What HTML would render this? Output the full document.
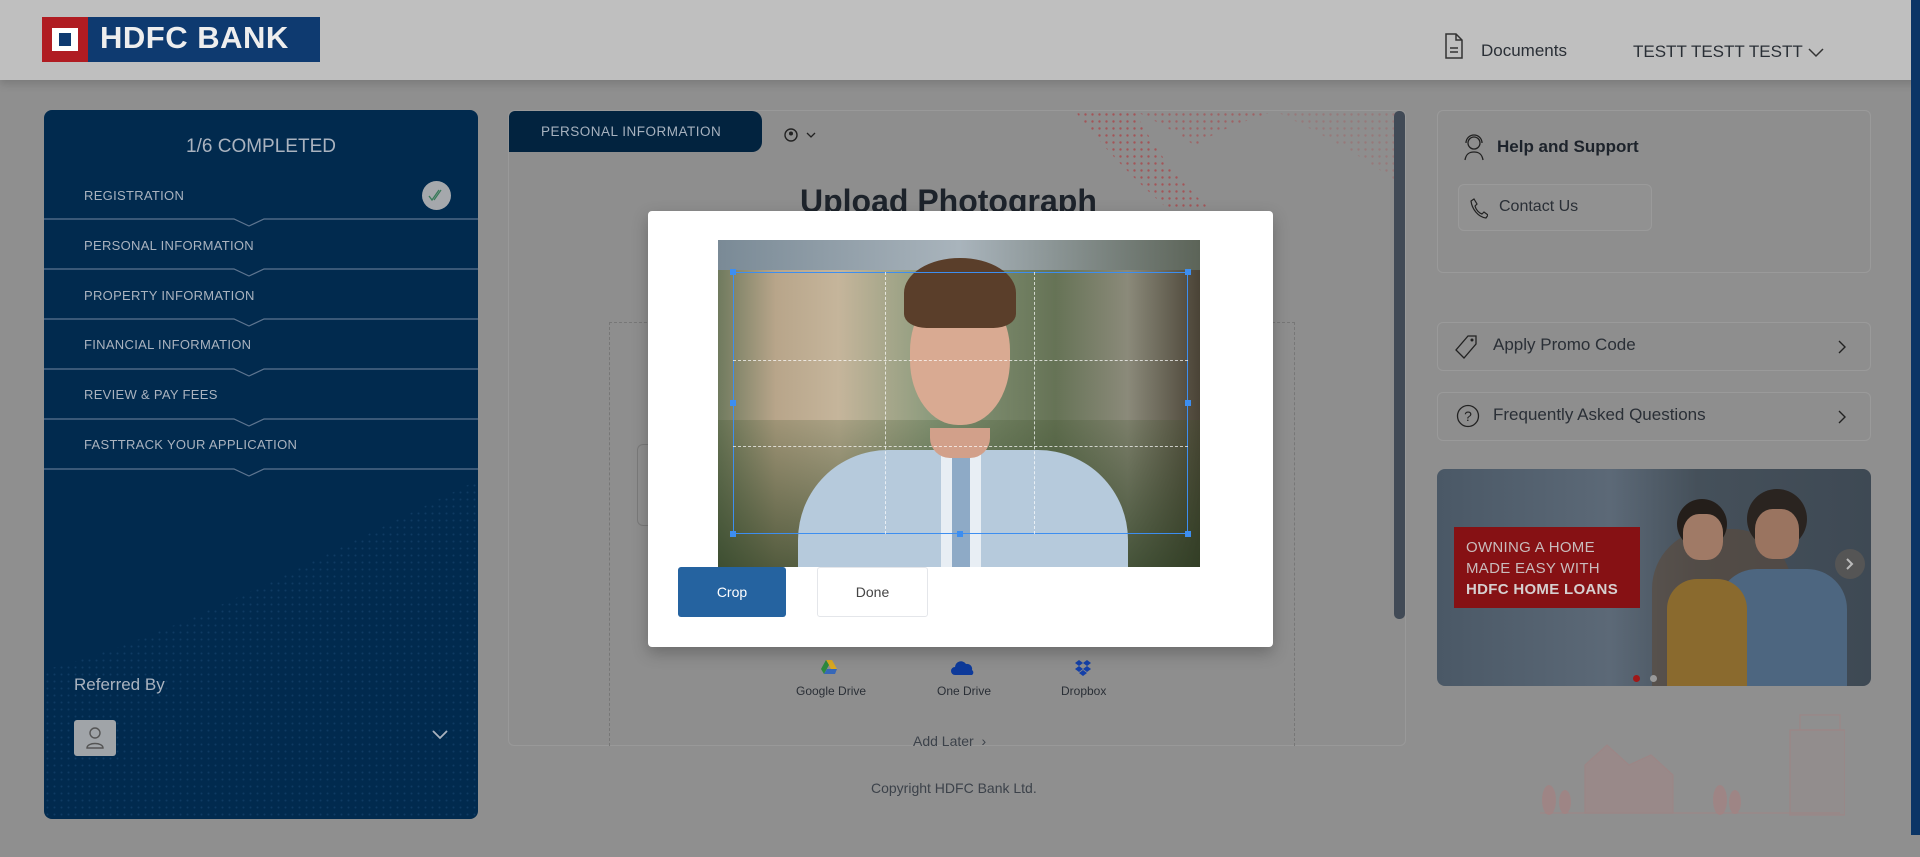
<!DOCTYPE html>
<html><head><meta charset="utf-8"><style>
*{box-sizing:border-box;margin:0;padding:0}
body{width:1920px;height:857px;overflow:hidden;background:#8f8f8f;font-family:"Liberation Sans",sans-serif;position:relative}
.abs{position:absolute}
.hdr{left:0;top:0;width:1920px;height:80px;background:#bfbfbf;box-shadow:0 4px 8px rgba(0,0,0,.15)}
.side{left:44px;top:110px;width:434px;height:709px;background:#012a4e;border-radius:8px;overflow:hidden}
.side .t{position:absolute;top:134px;left:0;width:100%;text-align:center;color:#aab3bf;font-size:19px}
.item{position:absolute;left:40px;color:#aab3bf;font-size:13px;letter-spacing:.3px}
.card{border:1px solid #999;border-radius:6px}
.txt{color:#2a2f36}
</style></head><body>
<div class="abs hdr"></div>
<!-- logo -->
<div class="abs" style="left:42px;top:17px;width:278px;height:45px;background:#0e3a70"></div>
<div class="abs" style="left:42px;top:17px;width:46px;height:45px;background:#b01c22"></div>
<div class="abs" style="left:52px;top:28px;width:26px;height:23px;background:#fff"></div>
<div class="abs" style="left:59px;top:33px;width:12px;height:13px;background:#0e3a70"></div>
<div class="abs" style="left:100px;top:20px;color:#eee;font-weight:bold;font-size:31px;letter-spacing:.5px">HDFC BANK</div>
<!-- header right -->
<svg class="abs" style="left:1444px;top:32px" width="20" height="28" viewBox="0 0 20 28"><path d="M2 2h10l6 6v18H2z M12 2v6h6 M6 16h8 M6 20h8" fill="none" stroke="#333" stroke-width="1.5"/></svg>
<div class="abs txt" style="left:1481px;top:41px;font-size:17px">Documents</div>
<div class="abs txt" style="left:1633px;top:42px;font-size:17px">TESTT TESTT TESTT</div>
<svg class="abs" style="left:1808px;top:48px" width="16" height="10"><path d="M1 1l7 7 7-7" fill="none" stroke="#333" stroke-width="1.5"/></svg>
<div class="abs" style="left:1911px;top:0;width:9px;height:835px;background:#0b3566"></div>
<!-- sidebar -->
<div class="abs side">
<svg class="abs" style="left:0;top:330px" width="434" height="380"><defs><pattern id="d" width="7" height="7" patternUnits="userSpaceOnUse"><circle cx="3.5" cy="3.5" r="1" fill="#2a5a8a"/></pattern></defs><path d="M0 230 C120 200 250 130 434 40 V380 H0z" fill="url(#d)" opacity=".35"/></svg>
<div class="t" style="top:26px">1/6 COMPLETED</div>
<div class="item" style="top:78px">REGISTRATION</div>
<div class="abs" style="left:378px;top:71px;width:29px;height:29px;border-radius:50%;background:#a5a8ac"></div>
<svg class="abs" style="left:384px;top:78px" width="18" height="14"><path d="M1 8l3 4 7-10 M6 12l7-10" fill="none" stroke="#3a7a5a" stroke-width="1.3"/></svg>
<div class="item" style="top:128px">PERSONAL INFORMATION</div>
<div class="item" style="top:178px">PROPERTY INFORMATION</div>
<div class="item" style="top:227px">FINANCIAL INFORMATION</div>
<div class="item" style="top:277px">REVIEW &amp; PAY FEES</div>
<div class="item" style="top:327px">FASTTRACK YOUR APPLICATION</div>
<svg class="abs" style="left:0;top:108px" width="434" height="270"><g fill="none" stroke="#5e7590" stroke-width="1.2">
<path d="M0 1H190l15 7 15-7H434"/><path d="M0 51H190l15 7 15-7H434"/><path d="M0 101H190l15 7 15-7H434"/><path d="M0 151H190l15 7 15-7H434"/><path d="M0 201H190l15 7 15-7H434"/><path d="M0 251H190l15 7 15-7H434"/></g></svg>
<div class="abs" style="left:30px;top:565px;color:#aab3bf;font-size:17px">Referred By</div>
<div class="abs" style="left:30px;top:610px;width:42px;height:36px;background:#a0a4a8;border-radius:3px"></div>
<svg class="abs" style="left:41px;top:616px" width="20" height="24"><circle cx="10" cy="7" r="5" fill="none" stroke="#555" stroke-width="1.4"/><path d="M2 22c0-6 16-6 16 0z" fill="none" stroke="#555" stroke-width="1.4"/></svg>
<svg class="abs" style="left:388px;top:620px" width="16" height="10"><path d="M1 1l7 7 7-7" fill="none" stroke="#aab3bf" stroke-width="1.8"/></svg>
</div>
<!-- main card -->
<div class="abs card" style="left:508px;top:110px;width:898px;height:636px;background:#8e8e8e"></div>
<svg class="abs" style="left:1075px;top:111px" width="320" height="120"><defs><pattern id="r" width="7" height="7" patternUnits="userSpaceOnUse"><circle cx="3.5" cy="3.5" r="1.2" fill="#a8474a"/></pattern></defs><path d="M0 0H60C80 40 110 80 150 110 L120 120 C80 90 30 40 0 0z" fill="url(#r)" opacity=".8"/><path d="M60 0H200C170 10 140 20 120 35 100 20 80 10 60 0z" fill="url(#r)" opacity=".6"/><path d="M200 0H320V70C280 40 240 20 200 0z" fill="url(#r)" opacity=".3"/></svg>
<div class="abs" style="left:509px;top:111px;width:253px;height:41px;background:#02233f;border-radius:6px 10px 10px 0"></div>
<div class="abs" style="left:541px;top:124px;color:#a7b2bf;font-size:13.5px;letter-spacing:.5px">PERSONAL INFORMATION</div>
<svg class="abs" style="left:784px;top:127px" width="40" height="16"><circle cx="7" cy="8" r="6" fill="none" stroke="#222" stroke-width="1.4"/><circle cx="7" cy="6.5" r="2" fill="#222"/><path d="M23 6l4 4 4-4" fill="none" stroke="#222" stroke-width="1.3"/></svg>
<div class="abs" style="left:800px;top:183px;font-size:32px;font-weight:bold;color:#1d232b">Upload Photograph</div>
<div class="abs" style="left:609px;top:322px;width:686px;height:424px;border:1px dashed #777;border-bottom:none"></div>
<div class="abs" style="left:637px;top:444px;width:30px;height:82px;border:1px solid #7a7a7a;border-right:none;border-radius:6px 0 0 6px"></div>
<div class="abs" style="left:1394px;top:111px;width:11px;height:508px;background:#414a56;border-radius:5px"></div>
<!-- cloud options -->
<svg class="abs" style="left:821px;top:659px" width="16" height="16"><path d="M5 1h6l5 9h-6z" fill="#d9a820"/><path d="M5 1L0 10l3 5 5-9z" fill="#2d8a3e"/><path d="M3 15h11l2-5H6z" fill="#3667b8"/></svg>
<div class="abs txt" style="left:796px;top:684px;font-size:12px">Google Drive</div>
<svg class="abs" style="left:951px;top:660px" width="24" height="16"><path d="M4 15a4 4 0 010-8 6 6 0 0111-3 5 5 0 016 6 3 3 0 010 5z" fill="#0e3a9a"/></svg>
<div class="abs txt" style="left:937px;top:684px;font-size:12px">One Drive</div>
<svg class="abs" style="left:1074px;top:659px" width="18" height="18"><path d="M5 1l4 3-4 3-4-3zM13 1l4 3-4 3-4-3zM5 7l4 3-4 3-4-3zM13 7l4 3-4 3-4-3zM9 11l4 3-4 3-4-3z" fill="#1440a8"/></svg>
<div class="abs txt" style="left:1061px;top:684px;font-size:12px">Dropbox</div>
<div class="abs" style="left:913px;top:733px;font-size:14px;color:#3c424a">Add Later &nbsp;›</div>
<div class="abs" style="left:871px;top:780px;font-size:14px;color:#3c424a">Copyright HDFC Bank Ltd.</div>
<!-- right panel -->
<div class="abs card" style="left:1437px;top:110px;width:434px;height:163px;background:#8e8e8e;border-color:#9a9a9a"></div>
<svg class="abs" style="left:1462px;top:133px" width="24" height="28"><circle cx="12" cy="10" r="6" fill="none" stroke="#222" stroke-width="1.3"/><path d="M4 10a8 8 0 0116 0M3 27c1-6 4-8 9-8s8 2 9 8" fill="none" stroke="#222" stroke-width="1.3"/></svg>
<div class="abs" style="left:1497px;top:137px;font-size:17px;font-weight:bold;color:#1d232b">Help and Support</div>
<div class="abs card" style="left:1458px;top:184px;width:194px;height:47px;background:#919191;border-color:#9a9a9a"></div>
<svg class="abs" style="left:1470px;top:197px" width="18" height="22"><path d="M4 2l3 5-2 2c1 4 4 7 7 8l2-2 4 3-2 3C8 20 2 12 1 4z" fill="none" stroke="#222" stroke-width="1.2"/></svg>
<div class="abs txt" style="left:1499px;top:198px;font-size:16px">Contact Us</div>
<div class="abs card" style="left:1437px;top:322px;width:434px;height:49px;background:#8e8e8e;border-color:#9a9a9a"></div>
<svg class="abs" style="left:1454px;top:334px" width="24" height="26"><path d="M14 2h8v8L10 24 2 16z" fill="none" stroke="#222" stroke-width="1.3"/><circle cx="18" cy="6" r="1.5" fill="#222"/></svg>
<div class="abs txt" style="left:1493px;top:335px;font-size:17px">Apply Promo Code</div>
<svg class="abs" style="left:1838px;top:340px" width="8" height="14"><path d="M1 1l6 6-6 6" fill="none" stroke="#222" stroke-width="1.4"/></svg>
<div class="abs card" style="left:1437px;top:392px;width:434px;height:49px;background:#8e8e8e;border-color:#9a9a9a"></div>
<svg class="abs" style="left:1456px;top:404px" width="24" height="24"><circle cx="12" cy="12" r="10.5" fill="none" stroke="#222" stroke-width="1.3"/><text x="12" y="17" font-size="14" text-anchor="middle" fill="#222" font-family="Liberation Sans">?</text></svg>
<div class="abs txt" style="left:1493px;top:405px;font-size:17px">Frequently Asked Questions</div>
<svg class="abs" style="left:1838px;top:410px" width="8" height="14"><path d="M1 1l6 6-6 6" fill="none" stroke="#222" stroke-width="1.4"/></svg>
<!-- banner -->
<div class="abs" style="left:1437px;top:469px;width:434px;height:217px;border-radius:8px;overflow:hidden;background:linear-gradient(90deg,#4a5866 0%,#5c6977 40%,#45505a 60%,#3e4954 100%)">
<div class="abs" style="left:215px;top:60px;width:140px;height:160px;background:#5b4a3a;border-radius:60px 60px 0 0;opacity:.6"></div>
<div class="abs" style="left:310px;top:20px;width:60px;height:60px;background:#2a2420;border-radius:50%"></div>
<div class="abs" style="left:318px;top:40px;width:44px;height:50px;background:#9a7460;border-radius:40%"></div>
<div class="abs" style="left:280px;top:100px;width:130px;height:120px;background:#4d6680;border-radius:40px 40px 0 0"></div>
<div class="abs" style="left:240px;top:30px;width:50px;height:50px;background:#241e1a;border-radius:50%"></div>
<div class="abs" style="left:246px;top:45px;width:40px;height:46px;background:#a07a66;border-radius:40%"></div>
<div class="abs" style="left:230px;top:110px;width:80px;height:110px;background:#8a6a2e;border-radius:30px 30px 0 0"></div>
</div>
<div class="abs" style="left:1454px;top:527px;width:186px;height:81px;background:#861114"></div>
<div class="abs" style="left:1466px;top:537px;color:#c9bcbc;font-size:15px;line-height:21px;letter-spacing:.3px">OWNING A HOME<br>MADE EASY WITH<br><b style="color:#d6cfcf">HDFC HOME LOANS</b></div>
<div class="abs" style="left:1835px;top:549px;width:30px;height:30px;border-radius:50%;background:#555"></div>
<svg class="abs" style="left:1846px;top:558px" width="8" height="12"><path d="M1 1l5 5-5 5" fill="none" stroke="#bbb" stroke-width="2"/></svg>
<div class="abs" style="left:1633px;top:675px;width:7px;height:7px;border-radius:50%;background:#a01818"></div>
<div class="abs" style="left:1650px;top:675px;width:7px;height:7px;border-radius:50%;background:#999"></div>
<!-- houses -->
<svg class="abs" style="left:1535px;top:705px" width="310" height="115"><g fill="none" stroke="#9c8686" stroke-width="1.2"><rect x="255" y="25" width="55" height="85" fill="#9a8a8a" fill-opacity=".3"/><rect x="265" y="10" width="40" height="15"/><path d="M50 108V60l22-20 22 20 22-10 22 20v38z" fill="#a88080" fill-opacity=".4"/><path d="M5 108h300"/></g><g fill="#a88080" opacity=".6"><ellipse cx="14" cy="95" rx="7" ry="15"/><ellipse cx="30" cy="97" rx="6" ry="12"/><ellipse cx="185" cy="95" rx="7" ry="15"/><ellipse cx="200" cy="97" rx="6" ry="12"/></g></svg>
<!-- modal -->
<div class="abs" style="left:648px;top:211px;width:625px;height:436px;background:#fff;border-radius:4px;box-shadow:0 6px 16px rgba(0,0,0,.25)"></div>
<div class="abs" style="left:718px;top:240px;width:482px;height:327px;overflow:hidden;background:linear-gradient(90deg,#6f7a5e 0%,#b8a58a 12%,#c5b59b 25%,#8a9a7c 45%,#667356 70%,#8b8a7a 85%,#4a4336 100%)">
<div class="abs" style="left:0;top:0;width:482px;height:30px;background:linear-gradient(90deg,#7a8a96,#a9b4bc 50%,#5c6458)"></div>
<div class="abs" style="left:0;top:180px;width:482px;height:147px;background:linear-gradient(180deg,rgba(60,80,40,.2),rgba(40,60,30,.7))"></div>
<div class="abs" style="left:80px;top:210px;width:330px;height:140px;background:#b6cadc;border-radius:90px 90px 0 0"></div>
<div class="abs" style="left:223px;top:200px;width:40px;height:127px;background:#e8eef4"></div>
<div class="abs" style="left:234px;top:210px;width:18px;height:117px;background:#8eaac6"></div>
<div class="abs" style="left:192px;top:50px;width:100px;height:135px;background:#d9aa92;border-radius:45% 45% 48% 48%"></div>
<div class="abs" style="left:186px;top:18px;width:112px;height:70px;background:#5a3e2a;border-radius:50% 50% 20% 20%"></div>
<div class="abs" style="left:212px;top:188px;width:60px;height:30px;background:#d2a08a;border-radius:0 0 20px 20px"></div>
</div>
<div class="abs" style="left:733px;top:272px;width:455px;height:262px;border:1px solid #3d8ef0"></div>
<div class="abs" style="left:885px;top:272px;width:1px;height:262px;border-left:1px dashed rgba(255,255,255,.7)"></div>
<div class="abs" style="left:1034px;top:272px;width:1px;height:262px;border-left:1px dashed rgba(255,255,255,.7)"></div>
<div class="abs" style="left:733px;top:360px;width:455px;height:1px;border-top:1px dashed rgba(255,255,255,.7)"></div>
<div class="abs" style="left:733px;top:446px;width:455px;height:1px;border-top:1px dashed rgba(255,255,255,.7)"></div>
<div class="abs" style="left:730px;top:269px;width:6px;height:6px;background:#3d8ef0"></div>
<div class="abs" style="left:1185px;top:269px;width:6px;height:6px;background:#3d8ef0"></div>
<div class="abs" style="left:730px;top:531px;width:6px;height:6px;background:#3d8ef0"></div>
<div class="abs" style="left:1185px;top:531px;width:6px;height:6px;background:#3d8ef0"></div>
<div class="abs" style="left:730px;top:400px;width:6px;height:6px;background:#3d8ef0"></div>
<div class="abs" style="left:1185px;top:400px;width:6px;height:6px;background:#3d8ef0"></div>
<div class="abs" style="left:957px;top:531px;width:6px;height:6px;background:#3d8ef0"></div>
<div class="abs" style="left:678px;top:567px;width:108px;height:50px;background:#2563a0;border-radius:3px;color:#fff;font-size:14px;text-align:center;line-height:50px">Crop</div>
<div class="abs" style="left:817px;top:567px;width:111px;height:50px;background:#fff;border:1px solid #e4e6ea;border-radius:3px;color:#444;font-size:14px;text-align:center;line-height:48px">Done</div>
</body></html>
